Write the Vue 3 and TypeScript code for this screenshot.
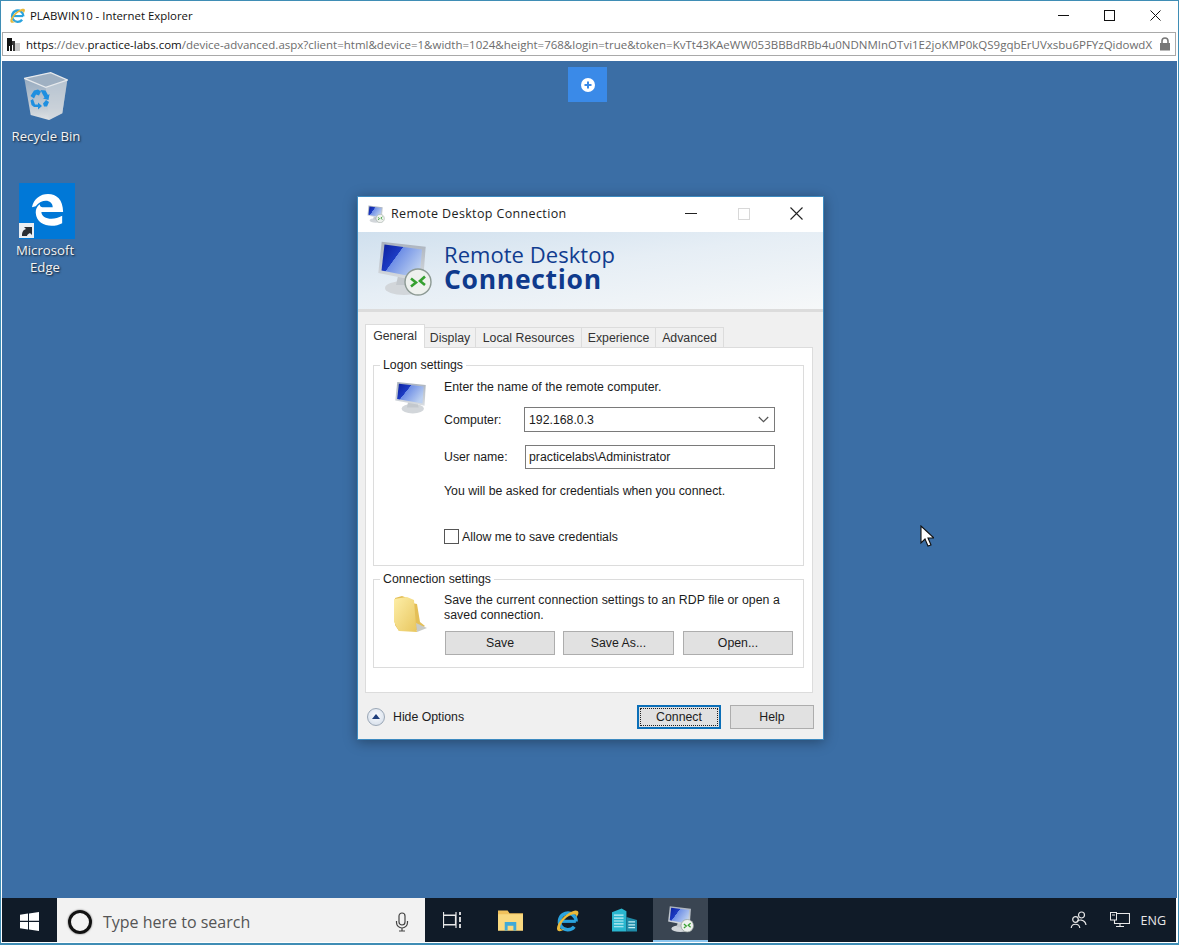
<script setup lang="ts">
const tabs: string[] = ['General', 'Display', 'Local Resources', 'Experience', 'Advanced']
const groupButtons: string[] = ['Save', 'Save As...', 'Open...']
</script>

<template>
  <div class="screen">
    <svg class="defs" aria-hidden="true">
      <defs>
        <linearGradient id="scr" x1="0" y1="0" x2="1" y2="0.6">
          <stop offset="0" stop-color="#0b1f9e" />
          <stop offset="0.42" stop-color="#1d3cc4" />
          <stop offset="0.43" stop-color="#6f8fe6" />
          <stop offset="1" stop-color="#bcd0f0" />
        </linearGradient>
        <linearGradient id="frame" x1="0" y1="0" x2="0" y2="1">
          <stop offset="0" stop-color="#aab2bd" />
          <stop offset="1" stop-color="#d9dde1" />
        </linearGradient>
        <linearGradient id="fold" x1="0" y1="0" x2="1" y2="1">
          <stop offset="0" stop-color="#fdeea8" />
          <stop offset="1" stop-color="#e8c65e" />
        </linearGradient>
        <linearGradient id="bin" x1="0" y1="0" x2="0" y2="1">
          <stop offset="0" stop-color="#8ea5bd" />
          <stop offset="0.75" stop-color="#c4ccd4" />
          <stop offset="1" stop-color="#dfe2e4" />
        </linearGradient>
        <symbol id="monitor-plain" viewBox="0 0 54 56">
          <ellipse cx="30" cy="47" rx="19" ry="8" fill="#d2d6da" />
          <path d="M22 36h16l2 9H20z" fill="#c3c8cd" />
          <path d="M3.7 1.700 52 6.700 50 42 .3 33z" fill="url(#frame)" />
          <path d="M6.500 4.500 48.500 9.500 46.500 38 3.500 30.500z" fill="url(#scr)" />
        </symbol>
        <symbol id="monitor" viewBox="0 0 54 56">
          <ellipse cx="26" cy="48" rx="19" ry="7" fill="#d2d6da" />
          <path d="M20 36h14l2 9H18z" fill="#c3c8cd" />
          <path d="M3.700 1.700 47.700 6.700 45 42 .3 33z" fill="url(#frame)" />
          <path d="M6.500 4.500 44 9.500 41.500 38 3.500 30.500z" fill="url(#scr)" />
          <circle cx="40" cy="42" r="13" fill="#eef1ee" stroke="#8d9a94" stroke-width="1.400" />
          <path d="M33 38.500 38 42.500l-5 4M47 36.500 42 41l5 4" fill="none" stroke="#35a030" stroke-width="2.600" />
        </symbol>
        <symbol id="folder" viewBox="0 0 36 37">
          <path d="M2 3 9 1 17 4 19 8 24 9 27 27 32 31 26 35 6 36 2 30z" fill="#e4bf57" />
          <path d="M1 4 14 2 21 5 23 31 24 37 6 36 1 27z" fill="url(#fold)" />
          <path d="M23 28 34 33 24 37z" fill="#c9cbc6" />
        </symbol>
        <symbol id="ie" viewBox="0 0 24 24">
          <path d="M6 12.800h14" stroke="#2aa3de" stroke-width="3" fill="none" />
          <path d="M20.300 13a8 8 0 1 0-1.800 5" stroke="#2aa3de" stroke-width="3.400" fill="none" />
          <path d="M2.500 21.500C-.5 18 8 6 17 3c3-1 5.500-.5 5.500 1.500 0 1.500-1 3-2 4.500.2-2-.5-3.500-3-3C11 7 4 16 5 19.500c.5 1.500 2.500 1.500 4.500.5-2.500 2-5.500 3-7 1.500z" fill="#e9b93b" />
        </symbol>
      </defs>
    </svg>

    <header class="titlebar">
      <div class="title-left">
        <svg class="title-ie"><use href="#ie" /></svg>
        <span class="title-text">PLABWIN10 - Internet Explorer</span>
      </div>
      <div class="caption">
        <span class="cap-btn"><i class="cap-min"></i></span>
        <span class="cap-btn"><i class="cap-max"></i></span>
        <span class="cap-btn">
          <svg class="cap-x" viewBox="0 0 11 11"><path d="M.5.500l10 10M10.500.500l-10 10" stroke="#111" stroke-width="1" fill="none" /></svg>
        </span>
      </div>
    </header>

    <div class="addressbar">
      <svg class="site-icon" viewBox="0 0 15 15">
        <path d="M1 1h5v13H4V9H3v5H1z" fill="#141414" />
        <path d="M6 4h3v10H7V8H6z" fill="#3a3a3a" />
        <path d="M9 6h5v8H9z" fill="#c9c9c9" />
      </svg>
      <span class="url"><span class="url-dark">https</span>://dev.<span class="url-dark">practice-labs.com</span>/device-advanced.aspx?client=html&amp;device=1&amp;width=1024&amp;height=768&amp;login=true&amp;token=KvTt43KAeWW053BBBdRBb4u0NDNMInOTvi1E2joKMP0kQS9gqbErUVxsbu6PFYzQidowdX</span>
      <svg class="lock" viewBox="0 0 12 14">
        <path d="M3 6V4a3 3 0 0 1 6 0v2" fill="none" stroke="#777" stroke-width="1.600" />
        <rect x="1" y="6" width="10" height="7.500" fill="#777" />
      </svg>
    </div>

    <main class="desktop">
      <div class="plus-tab">
        <svg class="plus-icon" viewBox="0 0 14 14">
          <circle cx="7" cy="7" r="7" fill="#fff" />
          <path d="M7 3.500v7M3.500 7h7" stroke="#3a8ae8" stroke-width="2" />
        </svg>
      </div>

      <div class="desk-icon bin-icon">
        <svg class="bin-svg" viewBox="0 0 44 50">
          <path d="M.3 6.300 26.700.7 43.300 8 38.300 41.300 25 48 6.700 43z" fill="url(#bin)" />
          <path d="M21.700 15.300 43.300 8 38.300 41.300 25 48z" fill="#cdd5dc" opacity=".55" />
          <path d="M.3 6.300 26.700.7 43.300 8 21.700 15.300z" fill="#9fb0c2" stroke="#e6e9ec" stroke-width="1.300" />
          <path d="M6.500 24 10 18.500l4-1 3 2-2 4-3-1-2 4zM16.500 18l5 .500 2.500 4.500 1.500-1-1 6-5.500-1.500 1.500-1-2-3.500zM9 27l-2.500 1.500 1 4.500 2.500 2h4v2.500l4-3.500-4-3.500v2h-3z M22 28l3 2-2 4.500h-3l-1-3z" fill="#1f8fe0" />
        </svg>
        <span class="desk-label">Recycle Bin</span>
      </div>

      <div class="desk-icon edge-icon">
        <div class="edge-tile">
          <svg class="edge-svg" viewBox="0 0 36 36">
            <path d="M1 15C3 6 10 1 18 1c9 0 16 6 16 19H11c0 7 12 10 22 4v8c-9 5-27 4-28-11 0-4 1-6 4-9 1 3 2 3 3 3h11c0-8-11-10-18-1z" fill="#fff" />
          </svg>
          <span class="shortcut">
            <svg viewBox="0 0 15 15" class="shortcut-svg">
              <rect width="15" height="15" fill="#e9eef3" />
              <path d="M3 13c0-4 1-6 4-7L5 4h8v8l-2-2c-2 1-3 2-3 3z" fill="#2a2e34" />
            </svg>
          </span>
        </div>
        <span class="desk-label">Microsoft<br />Edge</span>
      </div>

      <section class="dialog">
        <div class="dlg-title">
          <svg class="dlg-title-icon"><use href="#monitor" /></svg>
          <span class="dlg-title-text">Remote Desktop Connection</span>
          <div class="dlg-caption">
            <i class="dlg-min"></i>
            <i class="dlg-max"></i>
            <svg class="dlg-x" viewBox="0 0 13 13"><path d="M.5.500l12 12M12.500.500l-12 12" stroke="#222" stroke-width="1.100" fill="none" /></svg>
          </div>
        </div>

        <div class="banner">
          <svg class="banner-icon"><use href="#monitor" /></svg>
          <div class="banner-text">
            <div class="banner-line1">Remote Desktop</div>
            <div class="banner-line2">Connection</div>
          </div>
        </div>
        <div class="banner-sep"></div>

        <div class="dlg-body">
          <div class="tabs">
            <span v-for="(t, i) in tabs" :key="t" class="tab" :class="['tab-' + i, { active: i === 0 }]">{{ t }}</span>
          </div>
          <div class="panel">
            <div class="group logon">
              <span class="legend">Logon settings</span>
              <svg class="logon-icon"><use href="#monitor-plain" /></svg>
              <div class="logon-col">
                <div class="line enter">Enter the name of the remote computer.</div>
                <div class="field computer">
                  <label class="field-label">Computer:</label>
                  <div class="combo">
                    <span>192.168.0.3</span>
                    <svg class="chev" viewBox="0 0 11 7"><path d="M.8 1l4.700 4.700L10.200 1" fill="none" stroke="#555" stroke-width="1.200" /></svg>
                  </div>
                </div>
                <div class="field username">
                  <label class="field-label">User name:</label>
                  <div class="textbox">practicelabs\Administrator</div>
                </div>
                <div class="line asked">You will be asked for credentials when you connect.</div>
                <div class="check-row">
                  <i class="checkbox"></i>
                  <span>Allow me to save credentials</span>
                </div>
              </div>
            </div>

            <div class="group conn">
              <span class="legend">Connection settings</span>
              <svg class="folder-icon"><use href="#folder" /></svg>
              <div class="conn-col">
                <div class="conn-text">Save the current connection settings to an RDP file or open a saved connection.</div>
                <div class="conn-buttons">
                  <button v-for="b in groupButtons" :key="b" class="btn conn-btn" type="button">{{ b }}</button>
                </div>
              </div>
            </div>
          </div>

          <div class="footer">
            <div class="hide">
              <span class="hide-circle"><i class="hide-arrow"></i></span>
              <span>Hide Options</span>
            </div>
            <div class="footer-buttons">
              <button class="btn foot-btn primary" type="button"><span class="focus">Connect</span></button>
              <button class="btn foot-btn" type="button">Help</button>
            </div>
          </div>
        </div>
      </section>

      <svg class="cursor" viewBox="0 0 14 22">
        <path d="M1 1v17l4-4 3 7 3-1-3-7h6z" fill="#fff" stroke="#111" stroke-width="1.100" />
      </svg>
    </main>

    <footer class="taskbar">
      <div class="start">
        <svg class="win" viewBox="0 0 19 19">
          <path d="M0 2.700 8 1.500v7.300H0zM9 1.400 19 0v8.800H9zM0 10h8v7.400L0 16.300zM9 10h10v9L9 17.600z" fill="#fff" />
        </svg>
      </div>
      <div class="search">
        <i class="cortana"></i>
        <span class="search-text">Type here to search</span>
        <svg class="mic" viewBox="0 0 14 20">
          <rect x="4" y="1" width="6" height="12" rx="3" fill="none" stroke="#444" stroke-width="1.200" />
          <path d="M1.500 9v1.500a5.500 5.500 0 0 0 11 0V9M7 16v3M4 19h6" fill="none" stroke="#444" stroke-width="1.200" />
        </svg>
      </div>
      <div class="task-apps">
        <span class="app taskview">
          <svg class="tv" viewBox="0 0 19 18">
            <path d="M.5 1v16M13 1v16M0 4h13M0 14h13M.5 4.500h12v9H.5z" fill="none" stroke="#e8e8e8" stroke-width="1.200" />
            <path d="M17 1v3M17 6v5M17 13v4" stroke="#e8e8e8" stroke-width="1.800" />
          </svg>
        </span>
        <span class="app explorer">
          <svg class="app-svg" viewBox="0 0 26 22">
            <path d="M0 1h10l2 3h14v18H0z" fill="#f0c15c" />
            <path d="M0 5h26v17H0z" fill="#f9d980" />
            <path d="M7 13h12v9h-3v-5h-6v5H7z" fill="#3fa9d8" />
          </svg>
        </span>
        <span class="app iexp"><svg class="app-ie"><use href="#ie" /></svg></span>
        <span class="app server">
          <svg class="app-svg srv" viewBox="0 0 26 24">
            <path d="M0 4 10 0 15 3v21H0z" fill="#29b6cf" />
            <path d="M15 9 26 12v12H15z" fill="#1f8ba8" />
            <path d="M2 7h10M2 10h10M2 13h10M2 16h10M2 19h10M17 14h7M17 17h7M17 20h7" stroke="#c5f0f5" stroke-width="1.200" />
          </svg>
        </span>
        <span class="app rdp active-app"><svg class="app-monitor"><use href="#monitor" /></svg></span>
      </div>
      <div class="tray">
        <svg class="people" viewBox="0 0 18 18">
          <circle cx="11.500" cy="4" r="3" fill="none" stroke="#e8e8e8" stroke-width="1.200" />
          <path d="M7 11c1-3 8-3 9 3" fill="none" stroke="#e8e8e8" stroke-width="1.200" />
          <circle cx="5.500" cy="8.500" r="2.800" fill="none" stroke="#e8e8e8" stroke-width="1.200" />
          <path d="M1.200 17c.5-5 8-5 8.600 0" fill="none" stroke="#e8e8e8" stroke-width="1.200" />
        </svg>
        <svg class="net" viewBox="0 0 20 16">
          <path d="M4.500 1.500h15v10h-15zM6 14.500h8M10 11.500v3" fill="none" stroke="#e8e8e8" stroke-width="1.100" />
          <rect x=".5" y=".5" width="6" height="7.500" fill="#101b28" stroke="#e8e8e8" />
          <path d="M2 3h3" stroke="#e8e8e8" />
        </svg>
        <span class="eng">ENG</span>
      </div>
    </footer>
  </div>
</template>

<style scoped>
.screen {
  width: 1179px;
  height: 945px;
  box-sizing: border-box;
  display: flex;
  flex-direction: column;
  background: #fff;
  border-top: 1px solid #3f8db5;
  border-left: 1px solid #3f8db5;
  border-right: 1px solid #3f8db5;
  border-bottom: 2px solid #3f8db5;
  font-family: "Liberation Sans", Arial, sans-serif;
  overflow: hidden;
  position: relative;
}
.defs { position: absolute; width: 0; height: 0; }

.titlebar {
  height: 29px;
  display: flex;
  align-items: center;
  justify-content: space-between;
  flex: none;
}
.title-left { display: flex; align-items: center; padding-left: 8px; }
.title-ie { width: 17px; height: 17px; margin-right: 4px; }
.title-text { font-family: "Open Sans", sans-serif; font-size: 11.400px; color: #111; }
.caption { display: flex; }
.cap-btn { width: 45px; height: 29px; display: flex; align-items: center; justify-content: center; }
.cap-btn:nth-child(1) { margin-right: 1px; }
.cap-btn:nth-child(2) { margin-right: 1px; }
.cap-min { width: 11px; height: 1px; background: #111; }
.cap-max { width: 9px; height: 9px; border: 1px solid #111; }
.cap-x { width: 11px; height: 11px; }

.addressbar {
  height: 24px;
  box-sizing: border-box;
  margin: 2px 2px 0 1px;
  border: 1px solid #a9a9a9;
  display: flex;
  align-items: center;
  padding-left: 3px;
  flex: none;
}
.site-icon { width: 15px; height: 15px; flex: none; margin-right: 5px; }
.url {
  flex: 1;
  min-width: 0;
  white-space: nowrap;
  font-family: "Open Sans", sans-serif;
  font-size: 11.500px;
  color: #6d6d6d;
}
.url-dark { color: #111; }
.lock { width: 12px; height: 14px; flex: none; margin: 0 4px 0 6px; }

.desktop {
  margin-top: 5px;
  height: 837px;
  flex: none;
  background: #3b6ea5;
  position: relative;
  margin-left: 1px;
  margin-right: 1px;
}

.plus-tab {
  position: absolute;
  left: 566px;
  top: 6px;
  width: 39px;
  height: 35px;
  background: #3a8ae8;
  display: flex;
  align-items: center;
  justify-content: center;
}
.plus-icon { width: 14px; height: 14px; }

.desk-icon {
  position: absolute;
  display: flex;
  flex-direction: column;
  align-items: center;
  width: 76px;
}
.bin-icon { left: 6px; top: 11px; }
.edge-icon { left: 7px; top: 122px; }
.bin-svg { width: 44px; height: 50px; }
.desk-label {
  font-family: "Open Sans", sans-serif;
  font-size: 13.200px;
  line-height: 17px;
  color: #f3f3f3;
  text-align: center;
  text-shadow: 1px 1px 2px rgba(0, 0, 0, 0.75);
}
.bin-icon .desk-label { margin-top: 6px; }
.edge-icon .desk-label { margin-top: 3px; margin-left: -4px; }
.edge-tile {
  width: 56px;
  height: 56px;
  background: #0078d7;
  position: relative;
  display: flex;
  align-items: center;
  justify-content: center;
}
.edge-svg { width: 34px; height: 34px; margin-left: 1px; margin-top: -3px; }
.shortcut { position: absolute; left: 0; bottom: 1px; width: 15px; height: 15px; }
.shortcut-svg { width: 15px; height: 15px; display: block; }

.dialog {
  position: absolute;
  left: 355px;
  top: 135px;
  width: 467px;
  height: 544px;
  box-sizing: border-box;
  border: 1px solid #3d8ac0;
  background: #f0f0f0;
  box-shadow: 0 2px 12px rgba(0, 0, 0, 0.35);
  display: flex;
  flex-direction: column;
  color: #1c1c1c;
  font-size: 12.300px;
}
.dlg-title {
  height: 35px;
  box-sizing: border-box;
  padding: 0 0 2px 9px;
  background: #fff;
  display: flex;
  align-items: center;
  flex: none;
}
.dlg-title-icon { width: 18px; height: 18px; margin-right: 6px; }
.dlg-title-text {
  font-family: "Open Sans", sans-serif;
  font-size: 12.500px;
  flex: 1;
  color: #222;
  letter-spacing: 0.36px;
}
.dlg-caption { display: flex; align-items: center; padding-right: 20px; }
.dlg-min { width: 12px; height: 1px; background: #222; }
.dlg-max { width: 10px; height: 10px; border: 1px solid #d8d8d8; margin: 0 40px 0 41px; }
.dlg-x { width: 13px; height: 13px; }

.banner {
  height: 77px;
  flex: none;
  background: linear-gradient(172deg, #d0e0ee 0%, #e6eef5 45%, #f6f8f9 100%);
  display: flex;
  align-items: flex-start;
  padding-left: 20px;
  box-sizing: border-box;
}
.banner-icon { width: 54px; height: 56px; margin-top: 8px; }
.banner-text { margin-left: 12px; margin-top: 9px; color: #103c8f; }
.banner-line1 { font-family: "Open Sans", sans-serif; font-size: 22px; line-height: 26px; letter-spacing: 0.05px; }
.banner-line2 { font-family: "Open Sans", sans-serif; font-weight: 700; font-size: 26.500px; line-height: 25px; letter-spacing: 0.7px; color: #0f3a8c; }
.banner-sep { height: 3px; background: #dcdcdc; flex: none; }

.dlg-body { flex: 1; display: flex; flex-direction: column; padding: 12px 10px 0 7px; }
.tabs { display: flex; align-items: flex-end; height: 24px; position: relative; z-index: 1; margin-bottom: -1px; }
.tab {
  height: 21px;
  box-sizing: border-box;
  display: flex;
  align-items: center;
  justify-content: center;
  background: #f0f0f0;
  border: 1px solid #dcdcdc;
  border-left: none;
  color: #333;
}
.tab.active {
  height: 24px;
  background: #fff;
  border-left: 1px solid #dcdcdc;
  border-bottom: none;
  padding-bottom: 2px;
}
.tab-0 { width: 60px; }
.tab-1 { width: 51px; }
.tab-2 { width: 106px; }
.tab-3 { width: 74px; }
.tab-4 { width: 68px; }

.panel {
  height: 346px;
  flex: none;
  box-sizing: border-box;
  background: #fff;
  border: 1px solid #dcdcdc;
  padding: 17px 8px 0 7px;
  display: flex;
  flex-direction: column;
  gap: 13px;
}
.group {
  border: 1px solid #dcdcdc;
  position: relative;
  display: flex;
  box-sizing: border-box;
}
.legend {
  position: absolute;
  left: 6px;
  top: -8px;
  padding: 0 3px;
  background: #fff;
  line-height: 15px;
}
.logon { height: 201px; padding: 13px 0 0 19px; }
.logon-icon { width: 36px; height: 33px; flex: none; margin: 2px 15px 0 0; }
.logon-col { flex: 1; padding-right: 28px; }
.line { height: 16px; line-height: 16px; }
.field { display: flex; align-items: center; }
.computer { margin-top: 12px; height: 25px; }
.username { margin-top: 13px; height: 24px; }
.field-label { width: 80px; flex: none; }
.combo {
  flex: 1;
  height: 25px;
  box-sizing: border-box;
  border: 1px solid #7a7a7a;
  display: flex;
  align-items: center;
  justify-content: space-between;
  padding: 0 5px 0 4px;
}
.chev { width: 11px; height: 7px; }
.textbox {
  flex: 1;
  margin-left: 1px;
  height: 24px;
  box-sizing: border-box;
  border: 1px solid #7a7a7a;
  display: flex;
  align-items: center;
  padding-left: 3px;
}
.asked { margin-top: 14px; }
.check-row { display: flex; align-items: center; margin-top: 30px; height: 15px; }
.checkbox { width: 13px; height: 13px; border: 1px solid #555; background: #fff; margin-right: 3px; flex: none; }

.conn { height: 89px; padding: 13px 0 0 19px; }
.folder-icon { width: 36px; height: 37px; flex: none; margin: 2px 15px 0 0; }
.conn-col { flex: 1; padding-right: 10px; }
.conn-text { line-height: 15px; height: 30px; letter-spacing: 0.04px; }
.conn-buttons { display: flex; margin-top: 8px; margin-left: 1px; }
.btn {
  font-family: "Liberation Sans", Arial, sans-serif;
  font-size: 12.300px;
  color: #1c1c1c;
  background: #e1e1e1;
  border: 1px solid #adadad;
  padding: 0;
  height: 24px;
  box-sizing: border-box;
  display: flex;
  align-items: center;
  justify-content: center;
}
.conn-btn { width: 110px; }
.conn-btn:nth-child(2) { width: 111px; margin: 0 9px 0 8px; }

.footer {
  flex: 1;
  display: flex;
  align-items: flex-start;
  justify-content: space-between;
  padding: 12px 0 0 2px;
}
.hide { display: flex; align-items: center; height: 24px; }
.hide-circle {
  width: 18px;
  height: 18px;
  border-radius: 50%;
  box-sizing: border-box;
  border: 1px solid #9aa7b6;
  background: radial-gradient(circle at 50% 40%, #fafcff, #cfd9e6);
  display: flex;
  align-items: center;
  justify-content: center;
  margin-right: 8px;
}
.hide-arrow {
  width: 0;
  height: 0;
  border-left: 4px solid transparent;
  border-right: 4px solid transparent;
  border-bottom: 5px solid #1f3f7d;
  margin-top: -1px;
}
.footer-buttons { display: flex; gap: 9px; margin-right: -1px; }
.foot-btn { width: 84px; }
.primary { border: 2px solid #0b6fb8; padding: 1px; }
.focus {
  flex: 1;
  align-self: stretch;
  border: 1px dotted #222;
  display: flex;
  align-items: center;
  justify-content: center;
}

.cursor {
  position: absolute;
  left: 918px;
  top: 464px;
  width: 14px;
  height: 22px;
}

.taskbar {
  height: 44px;
  flex: none;
  display: flex;
  align-items: stretch;
  background: #101b28;
  margin: 0 2px 0 1px;
}
.start { width: 55px; display: flex; align-items: center; justify-content: center; flex: none; padding-top: 3px; box-sizing: border-box; }
.win { width: 19px; height: 19px; }
.search {
  width: 368px;
  flex: none;
  background: #f2f2f2;
  display: flex;
  align-items: center;
  padding: 3px 16px 0 11px;
  box-sizing: border-box;
}
.cortana {
  width: 24px;
  height: 24px;
  box-sizing: border-box;
  border-radius: 50%;
  border: 3px solid #111;
  box-shadow: 0 0 2px rgba(0, 0, 0, 0.6);
  flex: none;
  margin-right: 11px;
}
.search-text { flex: 1; font-family: "Open Sans", sans-serif; font-size: 16px; color: #555; }
.mic { width: 14px; height: 20px; }
.task-apps { display: flex; align-items: stretch; }
.app { display: flex; align-items: center; justify-content: center; width: 57px; flex: none; }
.taskview { width: 55px; margin-right: 2px; }
.app-svg { width: 25px; height: 22px; }
.srv { height: 24px; }
.tv { width: 19px; height: 18px; }
.app-ie { width: 25px; height: 25px; }
.rdp { width: 55px; }
.active-app {
  background: #3a4552;
  box-sizing: border-box;
  border-bottom: 2px solid #8ec7ef;
}
.app-monitor { width: 26px; height: 28px; }
.tray {
  margin-left: auto;
  display: flex;
  align-items: center;
  color: #e8e8e8;
  padding-right: 10px;
}
.people { width: 18px; height: 18px; }
.net { width: 20px; height: 16px; margin: 0 11px 0 22px; }
.eng { font-family: "Open Sans", sans-serif; font-size: 12.500px; }
</style>

<style>
html, body { margin: 0; background: #fff; }
</style>
